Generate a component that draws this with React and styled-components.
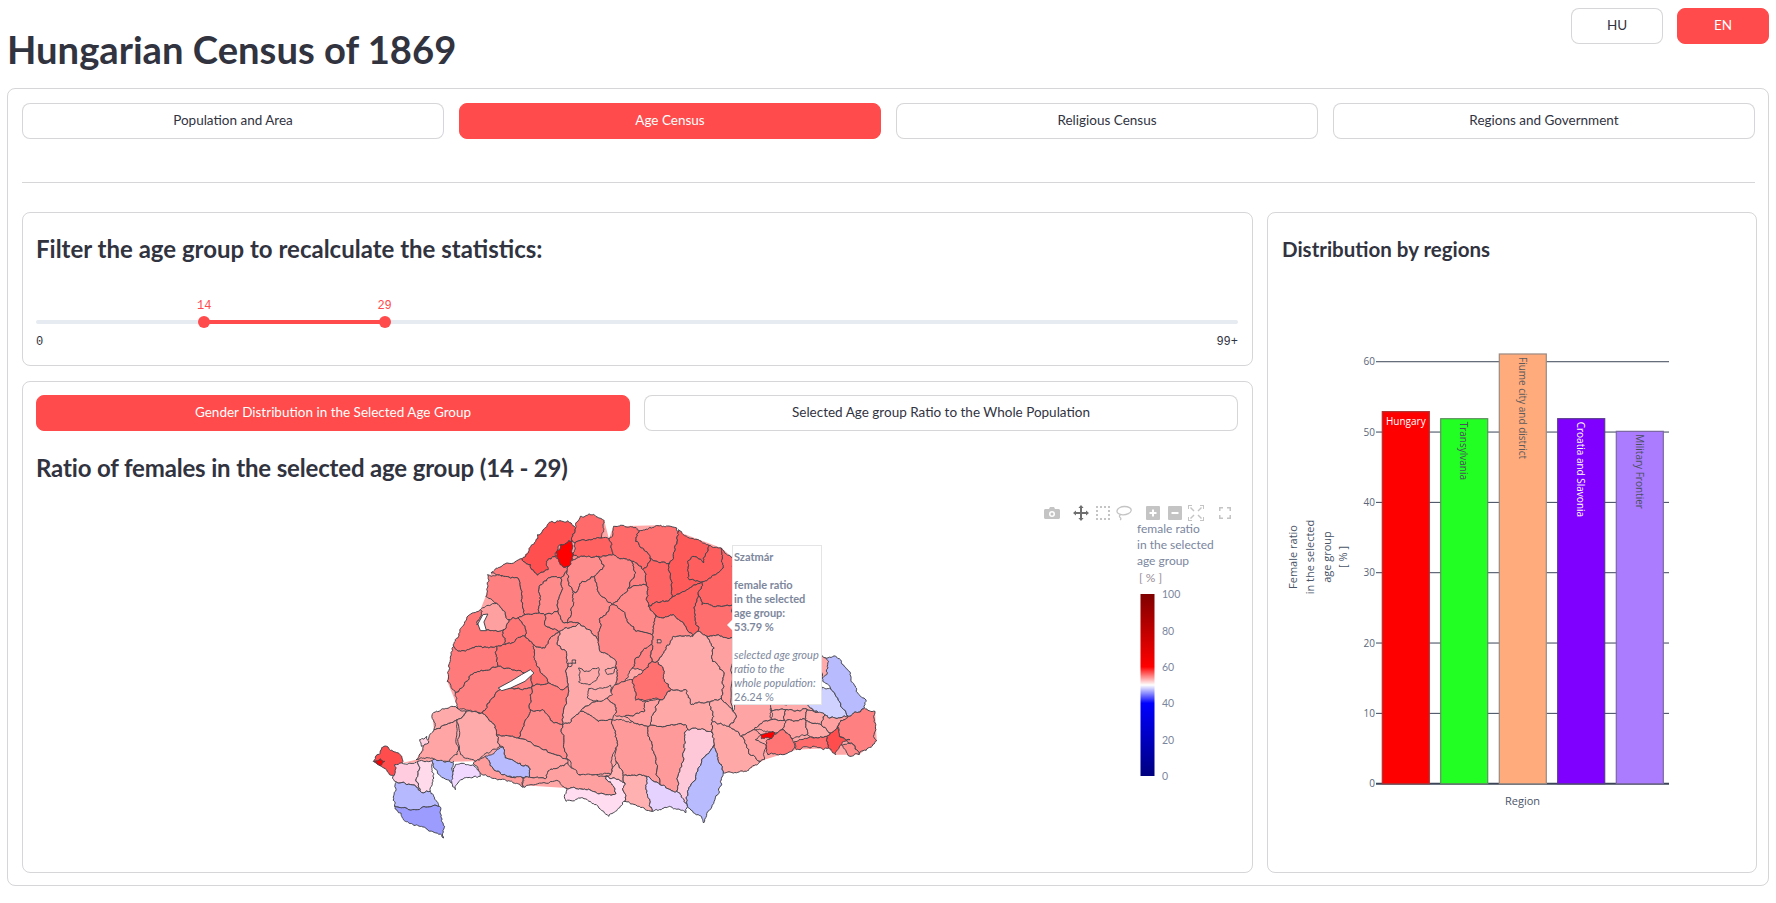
import styled, { createGlobalStyle } from "styled-components";

const RED = "#ff4b4b";
const FONT = "Lato, 'Noto Sans', sans-serif";
const PLOT_FONT = "'Open Sans', sans-serif";

const Global = createGlobalStyle`
  html, body { margin: 0; padding: 0; background: #fff; }
  body { font-family: ${FONT}; color: #31333f; overflow: hidden; }
  * { box-sizing: border-box; }
`;

const Page = styled.div`
  width: 1776px;
  height: 903px;
  padding: 0 7px;
`;
const Header = styled.header`
  height: 88px;
  display: flex;
  justify-content: space-between;
`;
const Title = styled.h1`
  margin: 27px 0 0;
  font-size: 38.2px;
  line-height: 44px;
  font-weight: 700;
`;
const LangRow = styled.div`
  display: flex;
  gap: 14px;
  padding-top: 8px;
`;
const Button = styled.button`
  font-family: ${FONT};
  font-size: 13.5px;
  height: 36px;
  width: ${(p) => (p.$width ? `${p.$width}px` : "100%")};
  border-radius: 8px;
  border: 1px solid ${(p) => (p.$active ? RED : "rgba(49,51,63,.2)")};
  background: ${(p) => (p.$active ? RED : "#fff")};
  color: ${(p) => (p.$active ? "#fff" : "#31333f")};
  padding: 0 0 2px;
`;
const Outer = styled.main`
  height: 798px;
  border: 1px solid rgba(49,51,63,.2);
  border-radius: 8px;
  padding: 14px 13px 14px 14px;
`;
const Tabs = styled.nav`
  display: grid;
  grid-template-columns: repeat(4, 1fr);
  gap: 15px;
`;
const Divider = styled.hr`
  margin: 43px 0 29px;
  border: 0;
  border-top: 1px solid rgba(49,51,63,.2);
`;
const Columns = styled.div`
  display: grid;
  grid-template-columns: 1231px 1fr;
  gap: 14px;
  height: 659px;
`;
const LeftColumn = styled.div`
  display: flex;
  flex-direction: column;
  gap: 15px;
`;
const Card = styled.section`
  border: 1px solid rgba(49,51,63,.2);
  border-radius: 8px;
  padding: 14px 14px 14px ${(p) => p.$left || 13}px;
  flex: ${(p) => (p.$grow ? 1 : "none")};
  height: ${(p) => (p.$height ? `${p.$height}px` : "auto")};
`;
const Heading = styled.h2`
  margin: ${(p) => p.$top || 0}px 0 0;
  font-size: ${(p) => p.$size || 24}px;
  letter-spacing: ${(p) => p.$spacing || 0}px;
  line-height: 32px;
  font-weight: 700;
`;
const Slider = styled.div`
  margin-top: 55px;
`;
const Track = styled.div`
  position: relative;
  height: 4px;
  border-radius: 2px;
  background: #e6eaf1;
`;
const Fill = styled.div`
  position: absolute;
  top: 0;
  bottom: 0;
  background: ${RED};
`;
const Thumb = styled.span`
  position: absolute;
  top: -4px;
  width: 12px;
  height: 12px;
  margin-left: -6px;
  border-radius: 50%;
  background: ${RED};
`;
const ThumbValue = styled.span`
  position: absolute;
  top: -18px;
  left: 6px;
  transform: translateX(-50%);
  color: ${RED};
  font: 12px/16px "Liberation Mono", monospace;
`;
const SliderEnds = styled.div`
  display: flex;
  justify-content: space-between;
  margin-top: 10px;
  font: 12px/16px "Liberation Mono", monospace;
`;
const SubTabs = styled.div`
  display: grid;
  grid-template-columns: 1fr 1fr;
  gap: 14px;
  margin-top: -1px;
`;
const MapPanel = styled.div`
  position: relative;
  display: flex;
  align-items: flex-start;
  margin-top: 14px;
  padding-left: 314px;
  height: 360px;
`;
const MapSvg = styled.svg`
  flex: none;
  width: 560px;
  height: 360px;
  polygon { stroke: #45454d; stroke-width: 1px; vector-effect: non-scaling-stroke; stroke-linejoin: round; }
`;
const ColorbarSvg = styled.svg`
  flex: none;
  width: 90px;
  height: 270px;
  margin: 21px 0 0 220px;
  font-family: ${FONT};
`;
const Modebar = styled.div`
  position: absolute;
  top: 7px;
  right: 5px;
  display: flex;
  gap: 13px;
`;
const ModeGroup = styled.div`
  display: flex;
  gap: 5.5px;
`;
const ModeIcon = styled.svg`
  width: 16px;
  height: 16px;
  display: block;
  fill: ${(p) => (p.$active ? "#6f6f6f" : "#c4c4c4")};
  stroke: none;
`;
const Tooltip = styled.div`
  position: absolute;
  left: 696px;
  top: 47px;
  width: 90px;
  height: 160px;
  padding: 4px 0 0 1px;
  background: #fff;
  border: 1px solid #e4e4e6;
  font-size: 11px;
  line-height: 14px;
  color: #7d879c;
  white-space: nowrap;
  &::before {
    content: "";
    position: absolute;
    left: -6px;
    top: 73px;
    border-style: solid;
    border-width: 6px 6px 6px 0;
    border-color: transparent #fff transparent transparent;
  }
`;
const TipStrong = styled.b`
  display: block;
  font-weight: 700;
  margin-bottom: ${(p) => (p.$gap ? 14 : 0)}px;
`;
const TipNote = styled.i`
  display: block;
`;
const ChartSvg = styled.svg`
  display: block;
  width: 460px;
  height: 500px;
  margin-top: 75px;
  font-family: ${PLOT_FONT};
`;

// every edge gets wobbled from a hash of its two ends, so neighbours stay glued together
const wobble = (a, b, depth) => {
  const len = Math.hypot(b[0] - a[0], b[1] - a[1]);
  if (depth === 0 || len < 6) return [];
  const seed = Math.sin(a[0] * 12.9898 + a[1] * 78.233 + b[0] * 37.719 + b[1] * 4.581) * 43758.5453;
  const r = seed - Math.floor(seed) - 0.5;
  const amp = Math.min(len * 0.45, 8) * r;
  const mid = [(a[0] + b[0]) / 2 - ((b[1] - a[1]) / len) * amp, (a[1] + b[1]) / 2 + ((b[0] - a[0]) / len) * amp];
  return [...wobble(a, mid, depth - 1), mid, ...wobble(mid, b, depth - 1)];
};
const roughen = (str) => {
  const pts = str.trim().split(/\s+/).map((s) => s.split(",").map(Number));
  const out = [];
  pts.forEach((p, i) => {
    const q = pts[(i + 1) % pts.length];
    const swap = p[0] > q[0] || (p[0] === q[0] && p[1] > q[1]);
    const inner = swap ? wobble(q, p, 4).reverse() : wobble(p, q, 4);
    out.push(p, ...inner);
  });
  return out.map((p) => `${p[0].toFixed(1)},${p[1].toFixed(1)}`).join(" ");
};

const regions = [
  ["#ff4f4f", "482,182 520,130 525,110 565,70 610,68 632,90 622,128 590,140 575,175 550,190 555,215 525,232 505,200"],
  ["#ff6a6a", "632,90 645,55 670,48 712,68 705,120 660,128 630,135 622,128"],
  ["#ff6060", "625,170 630,135 660,128 705,120 725,122 738,170 690,175 640,178"],
  ["#ff6a6a", "738,85 765,82 810,98 800,130 840,180 820,215 790,190 738,170 725,122 735,115"],
  ["#ff7070", "810,98 870,82 915,90 920,110 895,195 860,190 840,180 800,130"],
  ["#ff5a5a", "920,95 950,120 1005,142 990,195 960,175 945,190 950,245 985,252 900,300 895,195 920,110"],
  ["#ff5e5e", "1005,142 1040,150 1045,210 1010,240 985,252 950,245 945,190 960,175 990,195"],
  ["#ff6464", "1040,150 1072,180 1072,320 985,320 975,290 985,252 1010,240 1045,210"],
  ["#ff6464", "820,215 840,180 860,190 895,195 900,300 835,325 830,260"],
  ["#ff6060", "835,325 900,300 985,252 975,290 965,340 975,400 960,415 905,350 875,360 855,350"],
  ["#ff6e6e", "985,320 1072,320 1072,420 1000,415 975,400 965,340 975,290"],
  ["#ff7a7a", "395,225 440,195 482,182 505,200 525,232 555,215 550,190 575,175 595,205 612,205 590,240 555,240 530,265 530,345 490,350 470,240 430,235"],
  ["#ff8080", "385,230 430,235 470,240 490,350 470,360 445,365 415,320 380,295"],
  ["#ff8a8a", "530,265 555,240 590,240 582,340 545,350 530,345"],
  ["#ff8a8a", "582,340 590,240 612,205 625,170 640,178 615,185 610,245 625,280 620,340 610,375 600,375"],
  ["#ff8c8c", "615,185 640,178 690,175 712,205 685,235 650,250 630,285 625,280 610,245"],
  ["#ff8c8c", "610,375 620,340 625,280 630,285 650,250 685,235 700,290 735,320 700,360 695,430 670,395 640,375"],
  ["#ff8686", "712,205 690,175 738,170 790,190 800,225 780,270 735,320 700,290 685,235"],
  ["#ff8080", "800,225 790,190 820,215 830,260 780,270"],
  ["#ff8888", "735,320 780,270 830,260 835,325 855,350 845,410 800,400 770,350"],
  ["#ff8686", "700,360 735,320 770,350 800,400 845,410 845,440 800,480 790,510 770,550 745,560 745,490 700,460 695,430"],
  ["#ff8a8a", "855,350 875,360 905,350 960,415 905,415 880,460 860,490 845,490 845,440 845,410"],
  ["#ffaaaa", "585,400 640,375 670,395 695,430 700,460 745,490 745,560 720,600 690,610 655,630 645,640 620,670 595,680 610,565 605,460 580,440"],
  ["#ff8f8f", "515,440 545,450 560,420 585,400 580,440 605,460 610,565 590,575 555,555 530,510 520,490"],
  ["#ff7f7f", "470,360 490,350 530,345 545,350 545,375 585,400 560,420 545,450 515,440 490,415 490,385"],
  ["#ff8a8a", "545,350 582,340 600,375 610,375 640,375 585,400 545,375"],
  ["#ff7575", "430,395 445,365 470,360 490,385 490,415 435,440"],
  ["#ffa0a0", "365,335 395,320 415,320 445,365 430,395 380,395 355,380"],
  ["#ff7777", "315,385 335,350 365,335 355,380 380,395 430,395 435,440 410,445 360,445 310,460 290,445"],
  ["#ff7a7a", "290,445 310,460 360,445 410,445 415,505 340,530 295,585 272,550"],
  ["#ff7272", "415,505 410,445 435,440 490,415 515,440 520,490 530,510 555,555 510,565 505,530"],
  ["#ff8080", "295,585 340,530 415,505 505,530 510,565 420,575 370,645 305,635"],
  ["#ff7878", "370,645 420,575 510,565 505,635 470,720 410,710 405,690"],
  ["#ff7f7f", "510,565 555,555 590,575 610,565 595,680 570,675 540,635 505,635"],
  ["#ff8c8c", "505,635 540,635 570,675 595,680 610,785 575,770 470,720"],
  ["#ffaaaa", "905,415 960,415 975,400 1000,415 1020,450 1015,490 1045,520 1040,600 1010,610 955,620 940,575 900,575 880,545 880,520 860,490 880,460"],
  ["#ff8080", "800,480 845,440 845,490 820,520 790,510"],
  ["#ff7070", "790,545 820,520 845,490 860,490 880,520 880,545 900,575 870,605 800,607 795,560"],
  ["#ffa0a0", "1000,415 1072,420 1072,640 1040,600 1045,520 1015,490 1020,450"],
  ["#ff9090", "745,560 770,550 790,545 795,560 800,607 830,610 825,640 770,655 740,650 745,630 720,600"],
  ["#ff9999", "595,680 620,670 645,640 695,670 735,665 748,745 735,770 730,830 640,830 610,785"],
  ["#ffa0a0", "645,640 655,630 690,610 720,600 745,630 740,650 735,665 695,670"],
  ["#ff9a9a", "735,665 790,670 835,685 850,760 868,860 830,835 765,835 745,790 748,745"],
  ["#ff9a9a", "835,685 940,680 945,695 935,760 915,880 868,860 850,760"],
  ["#ffc8d8", "945,695 965,690 1015,705 1020,740 985,790 945,880 945,925 915,880 935,760"],
  ["#ffa8a8", "835,685 860,620 870,605 900,575 940,575 955,620 1010,610 1015,670 1015,705 965,690 945,695 940,680"],
  ["#ff9f9f", "770,655 825,640 830,610 870,605 860,620 835,685 790,670"],
  ["#ffa8a8", "1015,670 1060,685 1095,715 1120,770 1150,790 1110,820 1045,825 1040,800 1020,740 1015,705"],
  ["#b8bcff", "1020,740 1040,800 1045,825 1030,890 990,975 975,950 945,925 945,880 985,790"],
  ["#ffaaaa", "1010,610 1040,600 1072,640 1080,660 1060,685 1015,670"],
  ["#ffa4a4", "1072,640 1075,618 1180,618 1180,665 1130,695 1095,715 1060,685 1080,660"],
  ["#ffaaaa", "1180,618 1275,615 1340,660 1330,650 1280,635 1220,635 1180,640"],
  ["#cfd2ff", "1275,615 1322,568 1345,570 1395,655 1340,660"],
  ["#b8bcff", "1325,480 1360,475 1400,530 1425,590 1445,610 1440,630 1395,655 1345,570 1322,540"],
  ["#ffaaaa", "1320,470 1340,490 1335,530 1322,540"],
  ["#ffa8a8", "1180,640 1220,635 1220,670 1180,665"],
  ["#ff9f9f", "1220,635 1280,635 1275,665 1220,670"],
  ["#ffa8a8", "1280,635 1330,650 1320,680 1275,665"],
  ["#ff9f9f", "1220,670 1275,665 1280,710 1235,720 1210,695"],
  ["#ffa8a8", "1275,665 1320,680 1345,705 1335,715 1300,720 1280,710"],
  ["#ffa0a0", "1330,650 1340,660 1395,655 1370,675 1365,685 1345,705 1320,680"],
  ["#ffa0a0", "1180,665 1220,670 1210,695 1190,705 1175,702 1130,695"],
  ["#ff8080", "1395,655 1440,630 1470,640 1468,720 1475,728 1425,770 1405,735 1370,715 1370,675"],
  ["#ff6b6b", "1245,730 1300,720 1335,715 1340,750 1325,755 1300,745 1250,755"],
  ["#ff8a8a", "1405,735 1425,770 1400,775 1375,740"],
  ["#ff4c4c", "1345,705 1365,685 1370,715 1400,725 1375,740 1360,770 1340,750 1335,715"],
  ["#ff7575", "1165,730 1210,695 1235,720 1245,750 1210,770 1170,770"],
  ["#ffa0a0", "1095,715 1130,695 1150,710 1135,725 1165,745 1160,785 1150,790 1120,770"],
  ["#ff0000", "1150,710 1175,702 1190,705 1175,722 1152,722"],
  ["#ffaaaa", "230,650 285,625 325,640 300,665 235,695"],
  ["#ffa5a5", "185,785 205,745 235,695 300,665 300,770 270,790 235,783"],
  ["#ffaaaa", "300,665 325,640 370,645 405,690 410,710 420,745 375,770 350,790 310,770"],
  ["#ffa0a0", "410,710 470,720 575,770 610,785 610,795 560,815 550,840 500,838 500,805 435,780 430,748 420,745"],
  ["#b8bcff", "378,775 430,748 435,780 500,805 500,838 440,835 410,820"],
  ["#ff9d9d", "345,795 378,775 410,820 440,835 485,840 485,868 440,850 370,830"],
  ["#ffa0a0", "485,840 500,838 550,840 560,815 610,795 640,830 715,835 745,885 720,890 660,875 605,870 585,850 490,868"],
  ["#ffdcf0", "605,870 660,875 720,890 745,885 715,835 770,855 770,910 725,955 695,925 640,900 605,910"],
  ["#ffb0b0", "730,830 745,790 765,835 770,855 715,835"],
  ["#ffb0b0", "765,835 830,835 830,885 845,940 810,925 770,910 770,855"],
  ["#e6d2ff", "830,835 868,860 915,880 945,925 940,945 895,925 845,940 830,885"],
  ["#ff4c4c", "65,790 95,745 145,775 145,795 125,835 95,810"],
  ["#ff0000", "68,790 85,782 97,790 85,803"],
  ["#ffccdf", "125,800 145,795 190,790 185,850 205,885 170,860 130,852 120,835"],
  ["#ffdaea", "190,790 230,788 235,840 225,880 205,885 185,850"],
  ["#b7b9ff", "130,852 170,860 205,885 225,880 250,925 175,935 125,925"],
  ["#9c9cff", "125,925 175,935 250,925 265,985 262,1020 200,985 155,970"],
  ["#b2b8ff", "232,785 290,790 285,855 250,830 235,810"],
  ["#f0d8ff", "295,800 345,800 365,835 310,845 295,875 285,855"],
  ["#ffd0e0", "195,725 215,715 220,735 200,745"],
  ["#ff0000", "590,140 622,128 625,170 612,205 595,205 578,175"],
];
const enclaves = [
  ["#ffaaaa", "640,510 665,520 695,508 692,540 668,560 640,552"],
  ["#ffaaaa", "715,515 745,510 735,527 718,527"],
  ["#ffaaaa", "610,495 620,495 620,505 610,505"],
  ["#ffaaaa", "622,486 632,486 632,496 622,496"],
  ["#ffaaaa", "668,572 730,562 735,590 700,610 665,600"],
  ["#ffaaaa", "860,425 870,425 870,435 860,435"],
];
const lakes = [
  "415,570 450,550 480,530 505,515 515,525 490,550 450,570 425,578",
  "365,398 358,378 372,350 386,348 375,372 382,398",
];

const silhouette = "145,795 185,785 235,695 230,650 285,625 305,635 272,550 290,445 315,385 365,335 380,295 395,225 482,182 565,70 632,90 670,48 712,68 725,122 738,85 870,82 1040,150 1072,180 1072,640 1180,618 1275,615 1395,655 1470,640 1475,728 1425,770 1360,770 1340,750 1250,755 1160,785 1110,820 1045,825 1030,890 945,925 895,925 845,930 770,905 725,945 695,920 640,895 610,900 605,870 485,862 345,790";

const Pan = (props) => (
  <ModeIcon viewBox="0 0 16 16" {...props}>
    <path d="M8 0l2.6 3H9v4h4V5.4L16 8l-3 2.6V9H9v4h1.6L8 16l-2.6-3H7V9H3v1.6L0 8l3-2.6V7h4V3H5.4z" />
  </ModeIcon>
);
const Camera = () => (
  <ModeIcon viewBox="0 0 16 16">
    <path fillRule="evenodd" d="M1.5 4H5l1-2h4l1 2h3.5c.8 0 1.5.7 1.5 1.500v7c0 .8-.7 1.500-1.500 1.500h-13C.7 14 0 13.300 0 12.500v-7C0 4.700.7 4 1.500 4zM8 6a3 3 0 1 0 0 6 3 3 0 0 0 0-6zm0 1.500a1.500 1.500 0 1 1 0 3 1.500 1.500 0 0 1 0-3z" />
  </ModeIcon>
);
const BoxSelect = () => (
  <ModeIcon viewBox="0 0 16 16">
    <path d="M1 1h2v2H1zM5 1h2v2H5zM9 1h2v2H9zM13 1h2v2h-2zM1 5h2v2H1zM13 5h2v2h-2zM1 9h2v2H1zM13 9h2v2h-2zM1 13h2v2H1zM5 13h2v2H5zM9 13h2v2H9zM13 13h2v2h-2z" />
  </ModeIcon>
);
const Lasso = () => (
  <ModeIcon viewBox="0 0 16 16">
    <path fill="none" stroke="#c4c4c4" strokeWidth="1.3" d="M8.500 1.500c4 0 7 1.800 6.700 4-.3 2.400-4.500 4.500-8.500 4.300C3 9.600.6 8 1 5.800 1.400 3.400 4.700 1.500 8.500 1.500zM5 9.500c-1.800.5-2 2.200-.8 3 1 .6.800 1.600 0 2.500" />
  </ModeIcon>
);
const ZoomIn = () => (
  <ModeIcon viewBox="0 0 16 16">
    <path fillRule="evenodd" d="M2 1h12a1 1 0 0 1 1 1v12a1 1 0 0 1-1 1H2a1 1 0 0 1-1-1V2a1 1 0 0 1 1-1zm5 3.500v2.500H4.500v2H7v2.500h2V9h2.500V7H9V4.500z" />
  </ModeIcon>
);
const ZoomOut = () => (
  <ModeIcon viewBox="0 0 16 16">
    <path fillRule="evenodd" d="M2 1h12a1 1 0 0 1 1 1v12a1 1 0 0 1-1 1H2a1 1 0 0 1-1-1V2a1 1 0 0 1 1-1zm2.500 6v2h7V7z" />
  </ModeIcon>
);
const Autoscale = () => (
  <ModeIcon viewBox="0 0 16 16">
    <path d="M0 0h4v1H1v3H0zM12 0h4v4h-1V1h-3zM0 12h1v3h3v1H0zM15 12h1v4h-4v-1h3zM3 2l3.500 3.500-1 1L2 3zM13 2l1 1-3.500 3.500-1-1zM5.500 9.500l1 1L3 14l-1-1zM10.500 9.500L14 13l-1 1-3.500-3.500z" />
  </ModeIcon>
);
const Fullscreen = () => (
  <ModeIcon viewBox="0 0 16 16">
    <path d="M2 2h4v1.500H3.500V6H2zM10 2h4v4h-1.500V3.500H10zM2 10h1.500v2.500H6V14H2zM12.500 10H14v4h-4v-1.500h2.500z" />
  </ModeIcon>
);

const ticks = [0, 10, 20, 30, 40, 50, 60];
const yOf = (v) => 783.7 - v * 7.033;
const bars = [
  { x: 1382.3, v: 52.9, color: "#ff0000", edge: "#a33", name: "Hungary", fill: "#fff" },
  { x: 1440.7, v: 51.9, color: "#22ff22", edge: "#5f8f5f", name: "Transylvania", fill: "#4a4f5c", rot: 1459.5, start: 421.7 },
  { x: 1499.3, v: 61.1, color: "#ffab7c", edge: "#9b8a80", name: "Fiume city and district", fill: "#5c5a5c", rot: 1518.5, start: 357 },
  { x: 1557.7, v: 51.9, color: "#7f00ff", edge: "#5a3a90", name: "Croatia and Slavonia", fill: "#fff", rot: 1576.5, start: 421.7 },
  { x: 1616.3, v: 50.1, color: "#ab7cff", edge: "#7a68a0", name: "Military Frontier", fill: "#4a4f5c", rot: 1635.5, start: 434.3 },
];

const BarChart = () => (
  <ChartSvg viewBox="1282 340 460 500">
    {ticks.map((t) => (
      <g key={t}>
        <line x1="1376" x2="1669" y1={yOf(t)} y2={yOf(t)} stroke="#3b4557" strokeWidth={t === 0 ? 2 : 1} />
        <text x="1375" y={yOf(t) + 3.5} fontSize="10" textAnchor="end" fill="#5a6679">{t}</text>
      </g>
    ))}
    {bars.map((b) => (
      <g key={b.name}>
        <rect x={b.x} y={yOf(b.v)} width="47" height={yOf(0) - yOf(b.v)} fill={b.color} stroke={b.edge} strokeWidth="1.2" />
        {b.rot ? (
          <text transform={`translate(${b.rot} ${b.start}) rotate(90)`} fontSize="10" fill={b.fill}>{b.name}</text>
        ) : (
          <text x={b.x + 23.5} y="425" fontSize="10" textAnchor="middle" fill={b.fill}>{b.name}</text>
        )}
      </g>
    ))}
    <text x="1522.5" y="805" fontSize="11" textAnchor="middle" fill="#4a5568">Region</text>
    {[["Female ratio", 1297], ["in the selected", 1314], ["age group", 1331], ["[ % ]", 1347]].map(([line, x]) => (
      <text key={line} transform={`translate(${x} 557) rotate(-90)`} fontSize="11" textAnchor="middle" fill="#4a5568">{line}</text>
    ))}
  </ChartSvg>
);

const ColorScale = () => (
  <ColorbarSvg viewBox="1130 520 90 270">
    <defs>
      <linearGradient id="seismic" x1="0" x2="0" y1="0" y2="1">
        <stop offset="0" stopColor="#7f0000" />
        <stop offset="0.4" stopColor="#ff0000" />
        <stop offset="0.5" stopColor="#ffffff" />
        <stop offset="0.6" stopColor="#0000ff" />
        <stop offset="1" stopColor="#00007f" />
      </linearGradient>
    </defs>
    {[["female ratio", 534], ["in the selected", 550], ["age group", 566]].map(([line, y]) => (
      <text key={line} x="1137" y={y} fontSize="12" fill="#7b869e">{line}</text>
    ))}
    <text x="1139" y="583" fontSize="12" fill="#9a8f9a">[ % ]</text>
    <rect x="1140.500" y="595" width="14" height="182" fill="url(#seismic)" />
    {[[100, 599], [80, 636], [60, 672], [40, 708], [20, 745], [0, 781]].map(([t, y]) => (
      <text key={t} x="1162" y={y} fontSize="10.500" fill="#7b869e">{t}</text>
    ))}
  </ColorbarSvg>
);

export default function App() {
  return (
    <Page>
      <Global />
      <Header>
        <Title>Hungarian Census of 1869</Title>
        <LangRow>
          <Button $width={92}>HU</Button>
          <Button $width={92} $active>EN</Button>
        </LangRow>
      </Header>
      <Outer>
        <Tabs>
          <Button>Population and Area</Button>
          <Button $active>Age Census</Button>
          <Button>Religious Census</Button>
          <Button>Regions and Government</Button>
        </Tabs>
        <Divider />
        <Columns>
          <LeftColumn>
            <Card $height={154}>
              <Heading $top={6}>Filter the age group to recalculate the statistics:</Heading>
              <Slider>
                <Track>
                  <Fill style={{ left: "14%", width: "15%" }} />
                  <Thumb style={{ left: "14%" }}><ThumbValue>14</ThumbValue></Thumb>
                  <Thumb style={{ left: "29%" }}><ThumbValue>29</ThumbValue></Thumb>
                </Track>
                <SliderEnds>
                  <span>0</span>
                  <span>99+</span>
                </SliderEnds>
              </Slider>
            </Card>
            <Card $grow>
              <SubTabs>
                <Button $active>Gender Distribution in the Selected Age Group</Button>
                <Button>Selected Age group Ratio to the Whole Population</Button>
              </SubTabs>
              <Heading $top={21} $spacing={-0.16}>Ratio of females in the selected age group (14 - 29)</Heading>
              <MapPanel>
                <MapSvg viewBox="0 0 1568 1080" preserveAspectRatio="none">
                  <path d={`M${silhouette.replace(/ /g, "L")}Z`} fill="#ffa6a6" />
                  {regions.map(([color, pts], i) => (
                    <polygon key={i} points={roughen(pts)} fill={color} />
                  ))}
                  {enclaves.map(([color, pts], i) => (
                    <polygon key={i} points={roughen(pts)} fill={color} />
                  ))}
                  {lakes.map((pts, i) => (
                    <polygon key={i} points={pts} fill="#fff" />
                  ))}
                </MapSvg>
                <ColorScale />
                <Modebar>
                  <ModeGroup><Camera /></ModeGroup>
                  <ModeGroup><Pan $active /><BoxSelect /><Lasso /></ModeGroup>
                  <ModeGroup><ZoomIn /><ZoomOut /><Autoscale /></ModeGroup>
                  <ModeGroup><Fullscreen /></ModeGroup>
                </Modebar>
                <Tooltip>
                  <TipStrong $gap>Szatmár</TipStrong>
                  <TipStrong>female ratio</TipStrong>
                  <TipStrong>in the selected</TipStrong>
                  <TipStrong>age group:</TipStrong>
                  <TipStrong $gap>53.79 %</TipStrong>
                  <TipNote>selected age group</TipNote>
                  <TipNote>ratio to the</TipNote>
                  <TipNote>whole population:</TipNote>
                  26.24 %
                </Tooltip>
              </MapPanel>
            </Card>
          </LeftColumn>
          <Card $left={14}>
            <Heading $top={6} $size={20.5}>Distribution by regions</Heading>
            <BarChart />
          </Card>
        </Columns>
      </Outer>
    </Page>
  );
}
